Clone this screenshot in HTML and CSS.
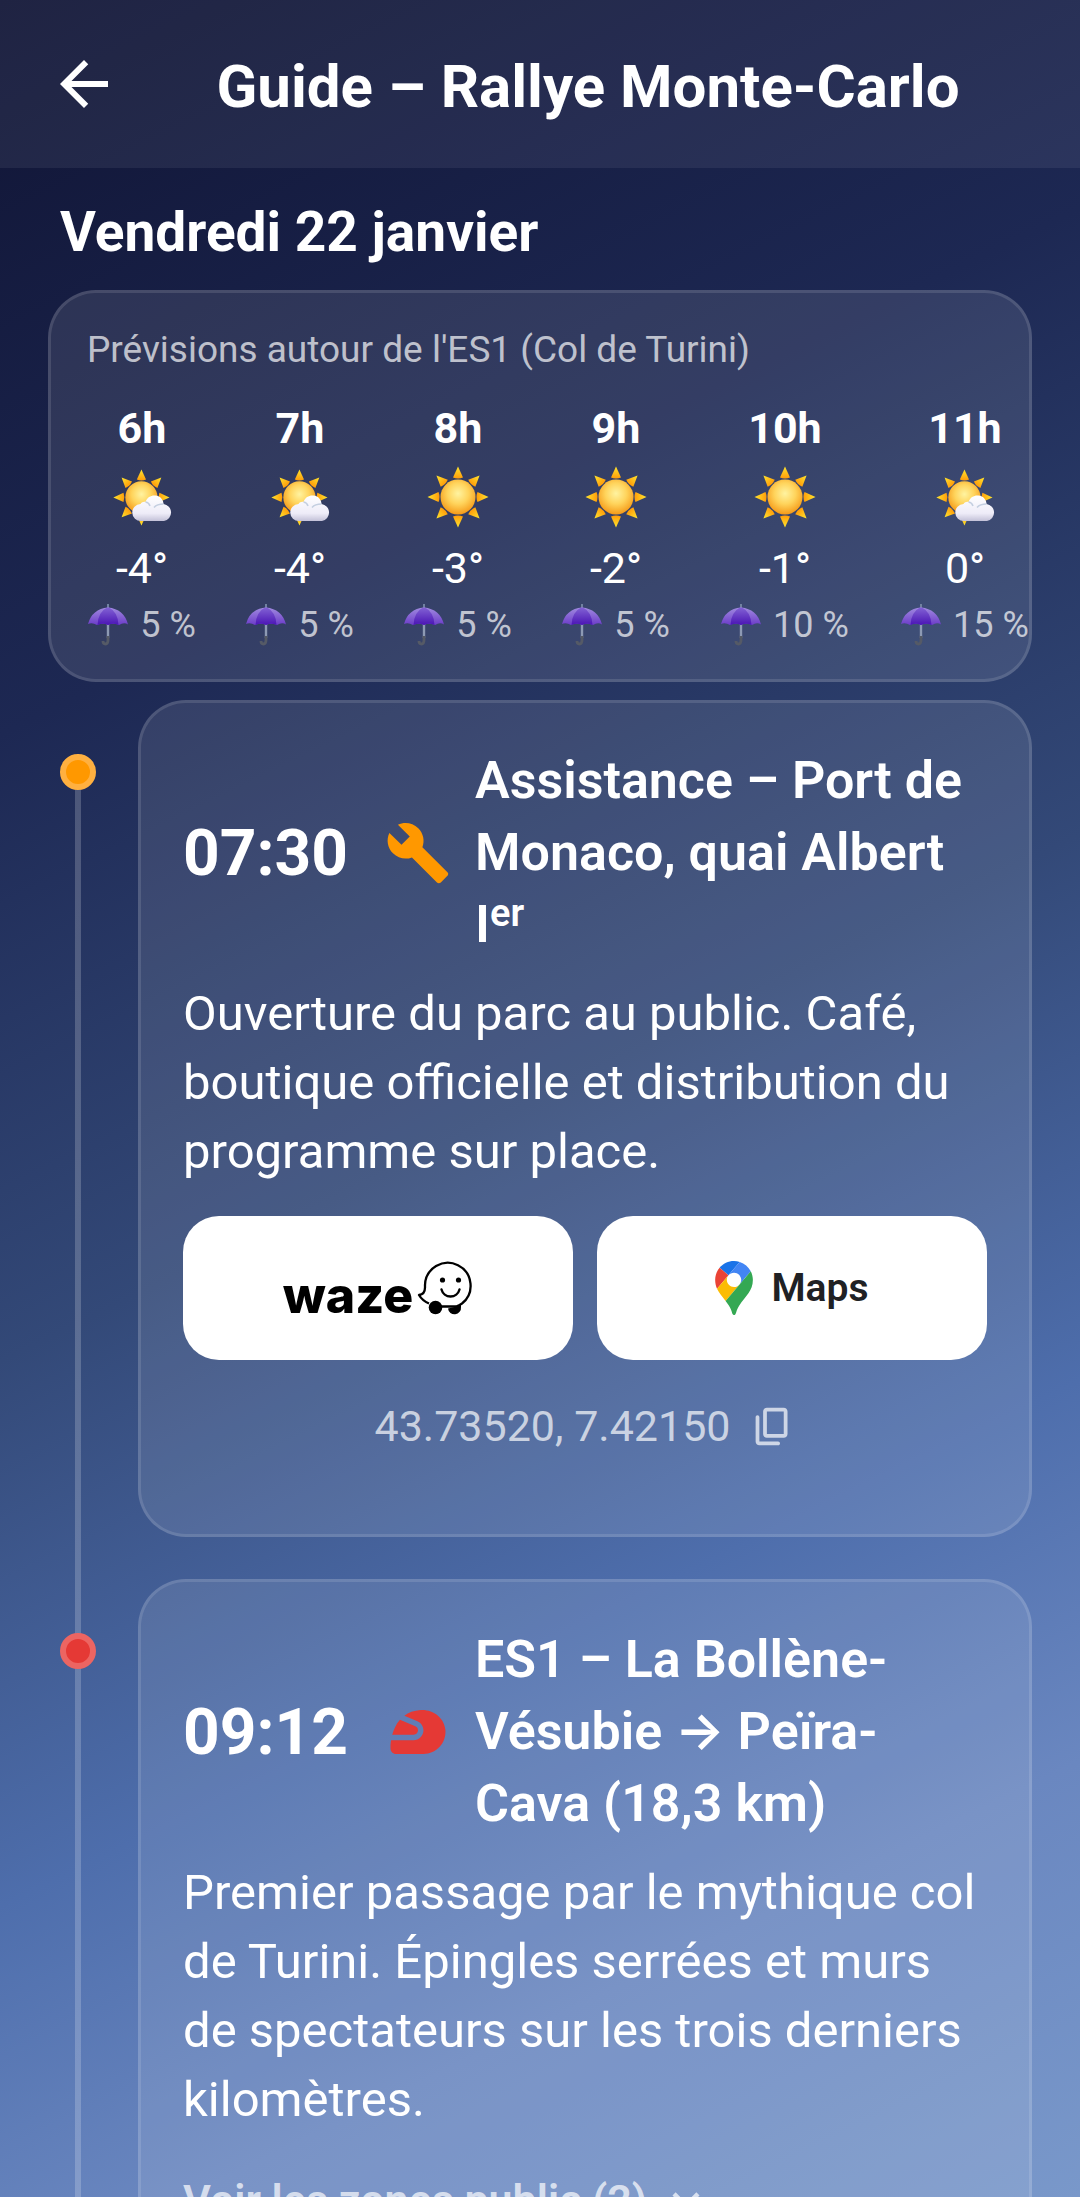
FILE: index.html
```html
<!DOCTYPE html>
<html lang="fr">
<head>
<meta charset="utf-8">
<meta name="viewport" content="width=device-width, initial-scale=1">
<title>Guide – Rallye Monte-Carlo</title>
<link rel="stylesheet" href="styles.css">
</head>
<body>
<svg class="sprite" aria-hidden="true">
  <defs>
    <radialGradient id="sun-core" cx=".5" cy=".4" r=".6">
      <stop offset="0" stop-color="#fff3a0"/>
      <stop offset=".5" stop-color="#ffd45c"/>
      <stop offset="1" stop-color="#f59a18"/>
    </radialGradient>
    <linearGradient id="sun-ray" x1="0" y1="0" x2="0" y2="1">
      <stop offset="0" stop-color="#ffe62e"/>
      <stop offset="1" stop-color="#ff9c0a"/>
    </linearGradient>
    <linearGradient id="cloud-fill" x1="0" y1="0" x2="0" y2="1">
      <stop offset="0" stop-color="#ffffff"/>
      <stop offset=".7" stop-color="#eeecf8"/>
      <stop offset="1" stop-color="#c3c1d8"/>
    </linearGradient>
    <linearGradient id="umbrella-side" x1="0" y1="0" x2="0" y2="1">
      <stop offset="0" stop-color="#a08ae0"/>
      <stop offset="1" stop-color="#6c3cc8"/>
    </linearGradient>
    <linearGradient id="umbrella-mid" x1="0" y1="0" x2="0" y2="1">
      <stop offset="0" stop-color="#8262d4"/>
      <stop offset="1" stop-color="#4a14b4"/>
    </linearGradient>
    <path id="ray" d="M32 1.5 37 12.5Q32 14.5 27 12.5Z" fill="url(#sun-ray)"/>
    <symbol id="sun" viewBox="0 0 64 64">
      <use href="#ray"/>
      <use href="#ray" transform="rotate(45 32 32)"/>
      <use href="#ray" transform="rotate(90 32 32)"/>
      <use href="#ray" transform="rotate(135 32 32)"/>
      <use href="#ray" transform="rotate(180 32 32)"/>
      <use href="#ray" transform="rotate(225 32 32)"/>
      <use href="#ray" transform="rotate(270 32 32)"/>
      <use href="#ray" transform="rotate(315 32 32)"/>
      <circle cx="32" cy="32" r="17.5" fill="url(#sun-core)"/>
    </symbol>
    <symbol id="sun-cloud" viewBox="0 0 64 64">
      <g transform="translate(2 3) scale(.92)">
        <use href="#ray"/>
        <use href="#ray" transform="rotate(45 32 32)"/>
        <use href="#ray" transform="rotate(90 32 32)"/>
        <use href="#ray" transform="rotate(180 32 32)"/>
        <use href="#ray" transform="rotate(225 32 32)"/>
        <use href="#ray" transform="rotate(270 32 32)"/>
        <use href="#ray" transform="rotate(315 32 32)"/>
        <circle cx="32" cy="32" r="17.5" fill="url(#sun-core)"/>
      </g>
      <path d="M31 56a8.500 8.500 0 0 1-.500-17c1-2 3.500-2.500 5-2 1.500-5 6-7 10-6.500 5 .500 8 4.500 8 8.500a8.600 8.600 0 0 1 .500 17Z" fill="url(#cloud-fill)"/>
      <path d="M35.500 37q3.500.500 4.500 4M44 42.500q3-3.500 9.500-3.500" fill="none" stroke="#c4cfe0" stroke-width="1.500"/>
    </symbol>
    <symbol id="umbrella" viewBox="0 0 40 42">
      <path d="M20 0V5" stroke="#7182a0" stroke-width="2"/>
      <path d="M20 20V34" stroke="#8d9ab4" stroke-width="2.400"/>
      <path d="M20 32V36Q20 40 17.500 40 15 40 15 37" fill="none" stroke="#555a66" stroke-width="2.800"/>
      <path d="M0 20Q4 5 20 3.500 36 5 40 20.500 36 18 31 21 25 18.500 20 21 15 18.500 9 21 4 18 0 20Z" fill="url(#umbrella-side)"/>
      <path d="M9.500 21Q10 8 19 3.500H21Q30 8 30.500 21 25 18.500 20 21 15 18.500 9.500 21Z" fill="url(#umbrella-mid)"/>
    </symbol>
    <symbol id="copy" viewBox="0 0 24 24">
      <path fill="currentColor" d="M15 20H5V7c0-.55-.45-1-1-1s-1 .45-1 1v13c0 1.1.9 2 2 2h10c.55 0 1-.45 1-1s-.45-1-1-1zm5-4V4c0-1.1-.9-2-2-2H9c-1.1 0-2 .9-2 2v12c0 1.1.9 2 2 2h9c1.1 0 2-.9 2-2zm-2 0H9V4h9v12z"/>
    </symbol>
  </defs>
</svg>

<div class="app">
  <header class="topbar">
    <button class="back" type="button" aria-label="Retour">
      <svg class="back-icon" viewBox="0 0 24 24" aria-hidden="true"><path fill="currentColor" d="M20 11H7.830l5.590-5.590L12 4l-8 8 8 8 1.410-1.410L7.830 13H20v-2z"/></svg>
    </button>
    <h1 class="page-title">Guide – Rallye Monte-Carlo</h1>
  </header>

  <main class="content">
    <h2 class="day">Vendredi 22 janvier</h2>

    <section class="glass weather">
      <h3 class="weather-title">Prévisions autour de l'ES1 (Col de Turini)</h3>
      <ul class="hours">
        <li class="hour"><span class="hour-label">6h</span><svg class="sky"><use href="#sun-cloud"/></svg><span class="temp">-4°</span><span class="rain"><svg class="umbrella"><use href="#umbrella"/></svg>5 %</span></li>
        <li class="hour"><span class="hour-label">7h</span><svg class="sky"><use href="#sun-cloud"/></svg><span class="temp">-4°</span><span class="rain"><svg class="umbrella"><use href="#umbrella"/></svg>5 %</span></li>
        <li class="hour"><span class="hour-label">8h</span><svg class="sky"><use href="#sun"/></svg><span class="temp">-3°</span><span class="rain"><svg class="umbrella"><use href="#umbrella"/></svg>5 %</span></li>
        <li class="hour"><span class="hour-label">9h</span><svg class="sky"><use href="#sun"/></svg><span class="temp">-2°</span><span class="rain"><svg class="umbrella"><use href="#umbrella"/></svg>5 %</span></li>
        <li class="hour hour-wide"><span class="hour-label">10h</span><svg class="sky"><use href="#sun"/></svg><span class="temp">-1°</span><span class="rain"><svg class="umbrella"><use href="#umbrella"/></svg>10 %</span></li>
        <li class="hour hour-wide"><span class="hour-label">11h</span><svg class="sky"><use href="#sun-cloud"/></svg><span class="temp">0°</span><span class="rain"><svg class="umbrella"><use href="#umbrella"/></svg>15 %</span></li>
      </ul>
    </section>

    <ol class="timeline">
      <li class="step">
        <div class="rail"><span class="dot dot-service"></span></div>
        <article class="glass card">
          <div class="card-head">
            <time class="time" datetime="07:30">07:30</time>
            <svg class="kind kind-service" viewBox="0 0 24 24" aria-hidden="true"><path fill="currentColor" d="M22.700 19l-9.100-9.100c.9-2.300.4-5-1.500-6.900-2-2-5-2.400-7.400-1.300L9 6 6 9 1.600 4.700C.4 7.100.9 10.100 2.900 12.100c1.900 1.900 4.600 2.400 6.900 1.500l9.100 9.100c.4.4 1 .4 1.400 0l2.300-2.300c.5-.4.5-1.100.1-1.400z"/></svg>
            <h3 class="card-title">Assistance – Port de<br>Monaco, quai Albert<br>I<sup class="ordinal">er</sup></h3>
          </div>
          <p class="text">Ouverture du parc au public. Café, boutique officielle et distribution du programme sur place.</p>
          <div class="actions">
            <button class="nav-button" type="button">
              <span class="waze">waze</span>
              <svg class="waze-face" viewBox="0 0 56 56" aria-hidden="true">
                <path d="M12 43.500C7.500 41.500 4 38.500 2 35c4-.5 6-3 6-7.500V25a22.800 22.800 0 1 1 37 18.500 25 25 0 0 1-6 3H22" fill="#fff" stroke="#000" stroke-width="2.300" stroke-linejoin="round"/>
                <circle cx="18.500" cy="47.500" r="6.800"/>
                <path d="M31 48.500a6.500 6.500 0 0 0 13-1.500V44Q38 47.500 31 48.500Z"/>
                <circle cx="25.500" cy="20" r="2.600"/>
                <circle cx="41.500" cy="20" r="2.600"/>
                <path d="M24.500 29.500a9.300 9.300 0 0 0 18 0" fill="none" stroke="#000" stroke-width="2.400" stroke-linecap="round"/>
              </svg>
            </button>
            <button class="nav-button nav-maps" type="button">
              <svg class="pin" viewBox="0 0 92.300 132.300" aria-hidden="true">
                <path fill="#1a73e8" d="M60.2 2.200C55.800.8 51 0 46.100 0 32 0 19.300 6.400 10.800 16.500l21.800 18.300L60.200 2.200z"/>
                <path fill="#ea4335" d="M10.800 16.500C4.100 24.500 0 34.900 0 46.100c0 8.700 1.700 15.700 4.600 22l28-33.300-21.800-18.300z"/>
                <path fill="#4285f4" d="M46.200 28.500c9.800 0 17.700 7.900 17.700 17.700 0 4.300-1.600 8.300-4.200 11.400 0 0 13.900-16.600 27.500-32.700-5.600-10.800-15.300-19-27-22.700L32.600 34.800c3.300-3.800 8.100-6.300 13.600-6.300"/>
                <path fill="#fbbc04" d="M46.200 63.800c-9.800 0-17.700-7.900-17.700-17.700 0-4.300 1.500-8.300 4.100-11.300l-28 33.300c4.800 10.600 12.800 19.200 21 29.900l34.100-40.500c-3.300 3.900-8.100 6.300-13.500 6.300"/>
                <path fill="#34a853" d="M59.100 109.200c15.400-24.100 33.300-35 33.300-63 0-7.700-1.900-14.900-5.200-21.300L25.600 98c2.600 3.400 5.300 7.300 7.900 11.300 9.400 14.500 6.800 23.100 12.800 23.100s3.400-8.700 12.800-23.200"/>
              </svg>
              Maps
            </button>
          </div>
          <button class="coords" type="button">43.73520, 7.42150 <svg class="copy"><use href="#copy"/></svg></button>
        </article>
      </li>

      <li class="step">
        <div class="rail"><span class="dot dot-stage"></span></div>
        <article class="glass card">
          <div class="card-head">
            <time class="time" datetime="09:12">09:12</time>
            <svg class="kind kind-stage" viewBox="0 0 24 24" aria-hidden="true"><path fill="currentColor" d="M12 11.390c0-.65-.39-1.230-.98-1.480L5.440 7.550c-1.480 1.680-2.320 3.700-2.800 5.450h7.750C11.280 13 12 12.280 12 11.390z"/><path fill="currentColor" d="M21.960 11.220c-.41-4.410-4.560-7.490-8.980-7.200-2.510.16-4.440.94-5.930 2.040l4.740 2.010c1.330.57 2.200 1.870 2.200 3.320 0 1.990-1.620 3.610-3.610 3.610H2.210C2 16.310 2 17.200 2 17.200V18c0 1.100.9 2 2 2h10c4.670 0 8.410-4.010 7.960-8.780z"/></svg>
            <h3 class="card-title">ES1 – La Bollène-<br>Vésubie <span class="arrow">→</span> Peïra-<br>Cava (18,3 km)</h3>
          </div>
          <p class="text">Premier passage par le mythique col de Turini. Épingles serrées et murs de spectateurs sur les trois derniers kilomètres.</p>
          <button class="zones" type="button">Voir les zones public (2) <svg class="chevron" viewBox="0 0 24 24" aria-hidden="true"><path d="M6.700 9.300l5.300 5.300 5.300-5.300" fill="none" stroke="currentColor" stroke-width="2"/></svg></button>
        </article>
      </li>
    </ol>
  </main>
</div>
</body>
</html>
```

FILE: styles.css
```css
* {
  box-sizing: border-box;
}

body {
  margin: 0;
  font-family: Roboto, "Noto Sans", sans-serif;
  color: #fff;
}

h1, h2, h3, p, ul, ol {
  margin: 0;
  padding: 0;
}

ul, ol {
  list-style: none;
}

button {
  padding: 0;
  border: 0;
  background: none;
  color: inherit;
  font: inherit;
  cursor: pointer;
}

svg {
  flex: none;
}

.sprite {
  position: absolute;
  width: 0;
  height: 0;
}

.app {
  display: flex;
  flex-direction: column;
  height: 100vh;
  overflow: hidden;
  background: linear-gradient(154deg, #101434 0%, #1d2853 27%, #334978 50%, #4e6eac 70%, #6a87c0 84%, #7998ca 100%);
}

.topbar {
  display: flex;
  flex: none;
  align-items: center;
  height: 168px;
  padding: 0 48px;
  background: rgba(240, 240, 255, 0.07);
}

.back {
  display: flex;
}

.back-icon {
  width: 72px;
  height: 72px;
}

.page-title {
  flex: 1;
  padding-top: 6px;
  padding-left: 24px;
  font-size: 60px;
  font-weight: 700;
  line-height: 72px;
  text-align: center;
}

.content {
  flex: 1;
  min-height: 0;
  padding: 30px 48px 0;
  overflow-y: auto;
  scrollbar-width: none;
}

.day {
  padding: 0 12px;
  margin-bottom: 24px;
  font-size: 55px;
  font-weight: 700;
  line-height: 68px;
}

.glass {
  border: 3px solid rgba(255, 255, 255, 0.12);
  border-radius: 48px;
  background: rgba(255, 255, 255, 0.1);
}

.weather {
  padding: 36px 0 24px 36px;
  margin-bottom: 18px;
  overflow: hidden;
}

.weather-title {
  margin-bottom: 30px;
  font-size: 37px;
  font-weight: 400;
  line-height: 42px;
  color: rgba(255, 255, 255, 0.7);
}

.hours {
  display: flex;
  gap: 48px;
  overflow-x: auto;
  scrollbar-width: none;
}

.hour {
  display: flex;
  flex: none;
  flex-direction: column;
  align-items: center;
  width: 110px;
}

.hour-wide {
  width: 132px;
}

.hour-label,
.temp {
  font-size: 43px;
  line-height: 54px;
}

.hour-label {
  font-weight: 700;
}

.sky {
  width: 64px;
  height: 64px;
  margin: 10px 0 12px;
}

.rain {
  display: flex;
  align-items: center;
  gap: 12px;
  font-size: 36px;
  line-height: 60px;
  white-space: nowrap;
  color: rgba(255, 255, 255, 0.7);
}

.umbrella {
  width: 40px;
  height: 42px;
}

.step {
  display: flex;
  gap: 42px;
}

.rail {
  display: flex;
  flex: none;
  justify-content: center;
  width: 36px;
  margin-left: 12px;
  background: linear-gradient(rgba(255, 255, 255, 0.2), rgba(255, 255, 255, 0.2)) center / 6px 100% no-repeat;
}

.step:first-child .rail {
  margin-top: 72px;
}

.dot {
  width: 36px;
  height: 36px;
  margin-top: 54px;
  border: 6px solid;
  border-radius: 50%;
}

.step:first-child .dot {
  margin-top: -18px;
}

.dot-service {
  border-color: #ffb040;
  background: #ff9800;
}

.dot-stage {
  border-color: #ec6562;
  background: #e53935;
}

.card {
  flex: 1;
  min-width: 0;
  padding: 42px;
  margin-bottom: 42px;
}

.card-head {
  display: flex;
  align-items: center;
  margin-bottom: 18px;
}

.time {
  flex: none;
  width: 166px;
  margin-right: 36px;
  font-size: 64px;
  font-weight: 700;
}

.kind {
  width: 66px;
  height: 66px;
  margin-right: 24px;
}

.kind-service {
  color: #ff9800;
}

.kind-stage {
  color: #e53935;
}

.card-title {
  font-size: 52px;
  font-weight: 600;
  line-height: 72px;
  white-space: nowrap;
}

.ordinal {
  font-size: 38px;
  line-height: 0;
  vertical-align: 16px;
}

.arrow {
  font-family: Inter, sans-serif;
  line-height: 1;
}

.text {
  font-size: 49px;
  line-height: 69px;
}

.actions {
  display: grid;
  grid-template-columns: 1fr 1fr;
  gap: 24px;
  margin-top: 30px;
}

.nav-button {
  display: flex;
  align-items: center;
  justify-content: center;
  height: 144px;
  border-radius: 36px;
  background: #fff;
  color: #000;
}

.waze {
  padding-top: 14px;
  font-family: Inter, sans-serif;
  font-size: 50px;
  font-weight: 800;
  line-height: 60px;
}

.waze-face {
  width: 56px;
  height: 56px;
  margin-left: 4px;
}

.nav-maps {
  gap: 18px;
  font-size: 39px;
  font-weight: 600;
  color: #202124;
}

.pin {
  width: 38px;
  height: 54px;
}

.coords {
  display: flex;
  align-items: center;
  justify-content: center;
  gap: 20px;
  width: 100%;
  margin: 30px 0;
  font-size: 43px;
  line-height: 72px;
  color: rgba(255, 255, 255, 0.7);
}

.copy {
  width: 45px;
  height: 45px;
}

.zones {
  display: flex;
  align-items: center;
  gap: 12px;
  margin-top: 36px;
  font-size: 43px;
  font-weight: 600;
  line-height: 60px;
  color: rgba(255, 255, 255, 0.7);
}

.chevron {
  width: 54px;
  height: 54px;
}
```
